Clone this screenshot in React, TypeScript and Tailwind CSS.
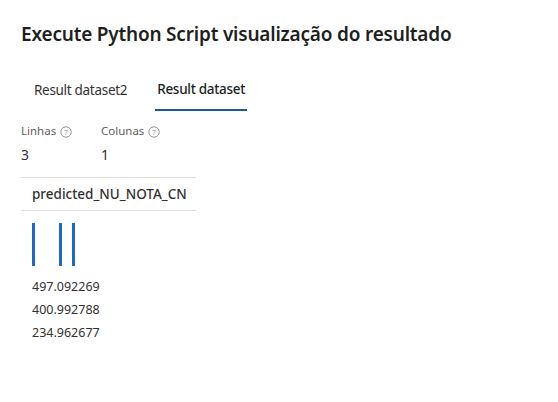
import React from "react";

function Help() {
  return (
    <svg width="12" height="12" viewBox="0 0 12 12" className="ml-[4px] mt-[1px]">
      <circle cx="6" cy="6" r="5.2" fill="none" stroke="#8a8886" strokeWidth="0.9" />
      <text x="6" y="8.7" textAnchor="middle" fontSize="8" fill="#8a8886" fontFamily="Open Sans, sans-serif">?</text>
    </svg>
  );
}

export default function App() {
  const values = ["497.092269", "400.992788", "234.962677"];
  return (
    <div className="w-[558px] h-[402px] bg-white pl-[21px] pt-[20px] text-[#323130]" style={{ fontFamily: '"Noto Sans", "Open Sans", sans-serif' }}>
      <h1 className="text-[19px] leading-[28px] font-semibold text-[#201f1e] tracking-[-0.2px]">
        Execute Python Script visualização do resultado
      </h1>
      <div className="flex mt-[21px] text-[13.5px] tracking-[-0.3px] text-[#323130]">
        <div className="pl-[13px] h-[42px] flex items-center">Result dataset2</div>
        <div className="ml-[28px] px-[2px] h-[42px] flex items-center font-medium text-[#201f1e] border-b-2 border-[#1c5aa0]">Result dataset</div>
      </div>
      <div className="flex mt-[12px]">
        <div className="w-[80px]">
          <div className="flex items-center text-[11.5px] leading-[16px] text-[#605e5c]">Linhas<Help /></div>
          <div className="text-[14px] leading-[20px] mt-[6px] text-[#323130]">3</div>
        </div>
        <div>
          <div className="flex items-center text-[11.5px] leading-[16px] text-[#605e5c]">Colunas<Help /></div>
          <div className="text-[14px] leading-[20px] mt-[6px] text-[#323130]">1</div>
        </div>
      </div>
      <div className="w-[175px] mt-[12px] border-t border-b border-[#e1dfdd] h-[34px] flex items-center pl-[11px] text-[13.5px] font-medium text-[#323130]">
        predicted_NU_NOTA_CN
      </div>
      <div className="relative h-[43px] mt-[12px] ml-[11px] w-[60px]">
        <div className="absolute left-0 top-0 w-[3px] h-[43px] bg-[#1e66cf]" />
        <div className="absolute left-[27px] top-0 w-[3px] h-[43px] bg-[#1e66cf]" />
        <div className="absolute left-[40px] top-0 w-[3px] h-[43px] bg-[#1e66cf]" />
      </div>
      <div className="mt-[10px] pl-[11px] text-[12.5px] text-[#323130]">
        {values.map((v) => (
          <div key={v} className="h-[23px] flex items-center">{v}</div>
        ))}
      </div>
    </div>
  );
}
